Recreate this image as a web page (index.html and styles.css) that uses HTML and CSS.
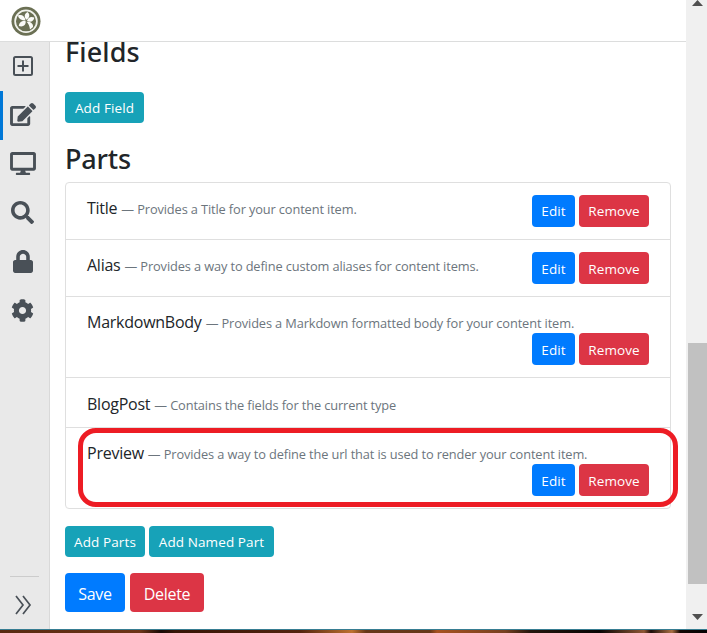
FILE: index.html
```html
<!DOCTYPE html>
<html lang="en">
<head>
<meta charset="utf-8">
<title>Edit Content Type</title>
<link rel="stylesheet" href="styles.css">
</head>
<body>
<div class="window">
  <div class="page">
    <header class="topbar">
      <svg class="logo" viewBox="0 0 30 30">
        <circle cx="15" cy="15.300" r="14.500" fill="#6b7054"/>
        <circle cx="15" cy="15.300" r="10.900" fill="#6b7054" stroke="#f1f2ec" stroke-width="1.700"/>
        <g fill="#fafaf7">
          <path d="M14.500 14.500C10.500 14.500 7.500 13 7 9.500C10.500 8 14 10 14.500 14.500Z"/>
          <path d="M15.200 13.800C12.800 10.500 13.500 7.500 16.500 6C19.500 8.500 18.500 12 15.200 13.800Z"/>
          <path d="M16 14.800C17 11.500 20 10 23.300 11.500C23 15 19.500 17 16 14.800Z"/>
          <path d="M14.700 15.300C15 19 12 21.500 7.800 20C8 16.500 11 14 14.700 15.300Z"/>
          <path d="M15.500 15.800C19.500 15.500 22.500 17.500 22 21L19 23.500C18.500 20 17.500 17.500 15.500 15.800Z"/>
        </g>
      </svg>
    </header>
    <div class="body">
      <nav class="sidebar">
        <a class="nav"><svg width="20" height="20" viewBox="0 0 20 20"><rect x="1" y="1" width="18" height="18" rx="1.500" fill="none" stroke="#495057" stroke-width="2"/><path d="M10 4.500V15.500M4.500 10H15.500" stroke="#495057" stroke-width="2"/></svg></a>
        <a class="nav active"><svg width="26" height="23" viewBox="0 0 576 512"><path fill="#495057" d="M402.600 83.200l90.200 90.200c3.800 3.800 3.800 10 0 13.800L274.400 405.600l-92.800 10.300c-12.400 1.400-22.900-9.100-21.500-21.500l10.300-92.800L388.800 83.200c3.800-3.800 10-3.800 13.800 0zm162-22.900l-48.800-48.800c-15.200-15.200-39.900-15.200-55.200 0l-35.400 35.400c-3.800 3.800-3.800 10 0 13.800l90.200 90.200c3.800 3.800 10 3.800 13.800 0l35.400-35.400c15.200-15.300 15.200-40 0-55.200zM384 346.200V448H64V128h229.800c3.200 0 6.200-1.300 8.500-3.500l40-40c7.600-7.600 2.200-20.500-8.500-20.500H48C21.500 64 0 85.500 0 112v352c0 26.500 21.500 48 48 48h352c26.500 0 48-21.500 48-48V306.200c0-10.700-12.900-16-20.500-8.500l-40 40c-2.200 2.300-3.500 5.300-3.500 8.500z"/></svg></a>
        <a class="nav"><svg width="26" height="23" viewBox="0 0 576 512"><path fill="#495057" d="M528 0H48C21.500 0 0 21.500 0 48v320c0 26.500 21.500 48 48 48h192l-16 48h-72c-13.300 0-24 10.700-24 24s10.700 24 24 24h272c13.300 0 24-10.700 24-24s-10.700-24-24-24h-72l-16-48h192c26.500 0 48-21.500 48-48V48c0-26.500-21.500-48-48-48zm-16 352H64V64h448v288z"/></svg></a>
        <a class="nav"><svg width="23" height="23" viewBox="0 0 512 512"><path fill="#495057" d="M505 442.700L405.300 343c-4.500-4.500-10.600-7-17-7H372c27.600-35.300 44-79.700 44-128C416 93.100 322.900 0 208 0S0 93.100 0 208s93.100 208 208 208c48.300 0 92.700-16.400 128-44v16.300c0 6.400 2.500 12.500 7 17l99.700 99.700c9.400 9.400 24.600 9.400 33.900 0l28.300-28.300c9.400-9.400 9.400-24.600.1-34zM208 336c-70.700 0-128-57.200-128-128 0-70.700 57.200-128 128-128 70.700 0 128 57.200 128 128 0 70.700-57.200 128-128 128z"/></svg></a>
        <a class="nav"><svg width="20" height="23" viewBox="0 0 448 512"><path fill="#495057" d="M400 224h-24v-72C376 68.200 307.800 0 224 0S72 68.200 72 152v72H48c-26.500 0-48 21.500-48 48v192c0 26.500 21.500 48 48 48h352c26.500 0 48-21.500 48-48V272c0-26.500-21.500-48-48-48zm-104 0H152v-72c0-39.700 32.300-72 72-72s72 32.300 72 72v72z"/></svg></a>
        <a class="nav"><svg width="23" height="23" viewBox="0 0 512 512"><path fill="#495057" d="M487.400 315.700l-42.600-24.600c4.300-23.200 4.300-47 0-70.200l42.600-24.600c4.900-2.800 7.100-8.600 5.500-14-11.100-35.600-30-67.800-54.700-94.600-3.800-4.100-10-5.100-14.800-2.300L380.800 110c-17.900-15.400-38.500-27.300-60.800-35.100V25.800c0-5.600-3.900-10.500-9.400-11.700-36.700-8.200-74.300-7.800-109.200 0-5.500 1.200-9.400 6.100-9.400 11.700V75c-22.200 7.900-42.800 19.800-60.800 35.100L88.700 85.500c-4.900-2.800-11-1.900-14.800 2.300-24.700 26.700-43.600 58.900-54.700 94.600-1.700 5.400.6 11.200 5.500 14L67.300 221c-4.300 23.200-4.300 47 0 70.200l-42.600 24.600c-4.900 2.800-7.100 8.600-5.500 14 11.100 35.600 30 67.800 54.700 94.600 3.800 4.100 10 5.100 14.800 2.300l42.600-24.600c17.900 15.400 38.500 27.300 60.800 35.100v49.200c0 5.600 3.900 10.500 9.400 11.700 36.700 8.200 74.300 7.800 109.200 0 5.500-1.200 9.400-6.100 9.400-11.700v-49.200c22.200-7.900 42.800-19.800 60.800-35.100l42.600 24.600c4.900 2.800 11 1.900 14.800-2.300 24.700-26.700 43.600-58.900 54.700-94.600 1.500-5.500-.7-11.300-5.600-14.100zM256 336c-44.100 0-80-35.900-80-80s35.900-80 80-80 80 35.900 80 80-35.900 80-80 80z"/></svg></a>
        <div class="collapse"><svg width="17" height="20" viewBox="0 0 17 20"><path d="M1 1L8 10L1 19M8 1L15 10L8 19" fill="none" stroke="#495057" stroke-width="1.700"/></svg></div>
      </nav>
      <main class="content">
        <h2 class="fields">Fields</h2>
        <div><button class="btn sm info w-field">Add Field</button></div>
        <h2 class="parts">Parts</h2>
        <ul class="list">
          <li><p><span class="name">Title</span><span class="hint">— Provides a Title for your content item.</span></p><div class="actions"><button class="btn sm primary">Edit</button><button class="btn sm danger">Remove</button></div></li>
          <li><p><span class="name">Alias</span><span class="hint">— Provides a way to define custom aliases for content items.</span></p><div class="actions"><button class="btn sm primary">Edit</button><button class="btn sm danger">Remove</button></div></li>
          <li class="stacked"><p><span class="name">MarkdownBody</span><span class="hint">— Provides a Markdown formatted body for your content item.</span></p><div class="actions"><button class="btn sm primary">Edit</button><button class="btn sm danger">Remove</button></div></li>
          <li class="plain"><p><span class="name">BlogPost</span><span class="hint">— Contains the fields for the current type</span></p></li>
          <li class="stacked marked"><p><span class="name">Preview</span><span class="hint">— Provides a way to define the url that is used to render your content item.</span></p><div class="actions"><button class="btn sm primary">Edit</button><button class="btn sm danger">Remove</button></div></li>
        </ul>
        <div class="row add"><button class="btn sm info w-parts">Add Parts</button><button class="btn sm info w-named">Add Named Part</button></div>
        <div class="row save"><button class="btn lg primary">Save</button><button class="btn lg danger">Delete</button></div>
      </main>
    </div>
  </div>
  <div class="scrollbar">
    <svg class="up" width="11" height="6"><path d="M0 6L5.500 0L11 6Z" fill="#505050"/></svg>
    <div class="thumb"></div>
    <svg class="down" width="11" height="6"><path d="M0 0L5.500 6L11 0Z" fill="#505050"/></svg>
  </div>
</div>
<div class="desktop"></div>
</body>
</html>
```

FILE: styles.css
```css
*, *::after { box-sizing: border-box; }
body { margin: 0; width: 707px; height: 633px; overflow: hidden; background: #fff; color: #212529; font-family: "Open Sans", "Noto Sans", sans-serif; font-size: 16px; line-height: 24px; }
h2, p, ul { margin: 0; padding: 0; }
.window { display: flex; height: 629px; }
.page { flex: 1; display: flex; flex-direction: column; min-width: 0; }
.topbar { height: 42px; flex: none; border-bottom: 1px solid #dcdddd; padding: 6px 0 0 11px; background: #fff; position: relative; z-index: 1; }
.logo { display: block; width: 30px; height: 30px; }
.body { flex: 1; display: flex; min-height: 0; }
.sidebar { width: 50px; flex: none; background: #e9e9e9; border-right: 1px solid #d9d9d9; display: flex; flex-direction: column; }
.nav { height: 49px; width: 49px; flex: none; display: flex; align-items: center; justify-content: center; padding: 0 4px 2px 0; }
.nav:first-child { padding: 0 3px 1px 0; }
.nav.active { border-left: 3px solid #0078d7; padding-right: 7px; }
.collapse { margin: auto 10px 0 10px; height: 53px; border-top: 1px solid #ccc; padding: 18px 0 0 5px; }
.collapse svg { display: block; }
.content { flex: 1; min-width: 0; padding: 0 15px; display: flow-root; }
h2 { font-family: "Noto Sans", sans-serif; font-weight: 500; font-size: 27px; line-height: 34px; }
.fields { margin: -7px 0 23px; letter-spacing: .1px; }
.parts { margin: 19px 0 6px; letter-spacing: -.2px; }
.btn { display: inline-flex; align-items: center; justify-content: center; border: 0; padding: 1px 0 0; margin: 0; border-radius: 4px; color: #fff; font: 13.500px/20px "Open Sans", sans-serif; letter-spacing: .1px; white-space: nowrap; vertical-align: top; }
.sm { height: 31px; }
.info { background: #17a2b8; }
.primary { background: #007bff; }
.danger { background: #dc3545; }
.w-field { width: 79px; }
.w-parts { width: 80px; }
.w-named { width: 125px; }
.list { list-style: none; border: 1px solid #dfdfdf; border-radius: 4px; height: 327px; }
.list li { display: flex; justify-content: space-between; height: 57px; padding: 12px 21px; border-bottom: 1px solid #dfdfdf; position: relative; }
.list li:last-child { border-bottom: 0; }
.list p { display: flex; gap: 4px; align-items: baseline; height: 24px; white-space: nowrap; padding-top: 1px; }
.list .stacked { height: 81px; flex-direction: column; justify-content: flex-start; }
.list .plain { height: 50px; padding-top: 13px; }
.name { font-size: 16px; letter-spacing: -.25px; }
.hint { font-size: 12.800px; color: #6c757d; letter-spacing: -.12px; }
.actions { display: flex; gap: 4px; align-self: flex-end; }
.actions .btn { height: 32px; }
.list li:first-child .btn { padding: 0; }
.actions .primary { width: 43px; }
.actions .danger { width: 70px; }
.marked::after { content: ""; position: absolute; left: 12px; top: 0; width: 600px; height: 79px; border: 5px solid #ed1c24; border-radius: 18px; }
.row { display: flex; gap: 4px; }
.add { margin-top: 17px; }
.save { margin-top: 16px; gap: 5px; }
.lg { height: 39px; padding-top: 2px; font-size: 16px; letter-spacing: -.3px; }
.lg.primary { width: 60px; }
.lg.danger { width: 74px; }
.scrollbar { width: 21px; flex: none; background: #f0f0f0; display: flex; flex-direction: column; padding-left: 2px; }
.scrollbar svg { flex: none; display: block; margin-left: 4px; }
.thumb { height: 241px; flex: none; margin-top: 337px; background: #c1c1c1; }
.scrollbar .down { margin-top: 30px; }
.desktop { height: 4px; border-top: 1px solid #377d92; background: linear-gradient(90deg, #572910 0, #6d3518 140px, #180a06 161px, #361506 175px, #53240f 300px, #be7130 352px, #663719 366px, #653718 430px, #a75220 437px, #764020 505px, #24160d 530px, #080504 600px, #8f5735 644px, #1b0c09 651px, #a96f43 672px, #130703 680px, #050303 707px); }
```
